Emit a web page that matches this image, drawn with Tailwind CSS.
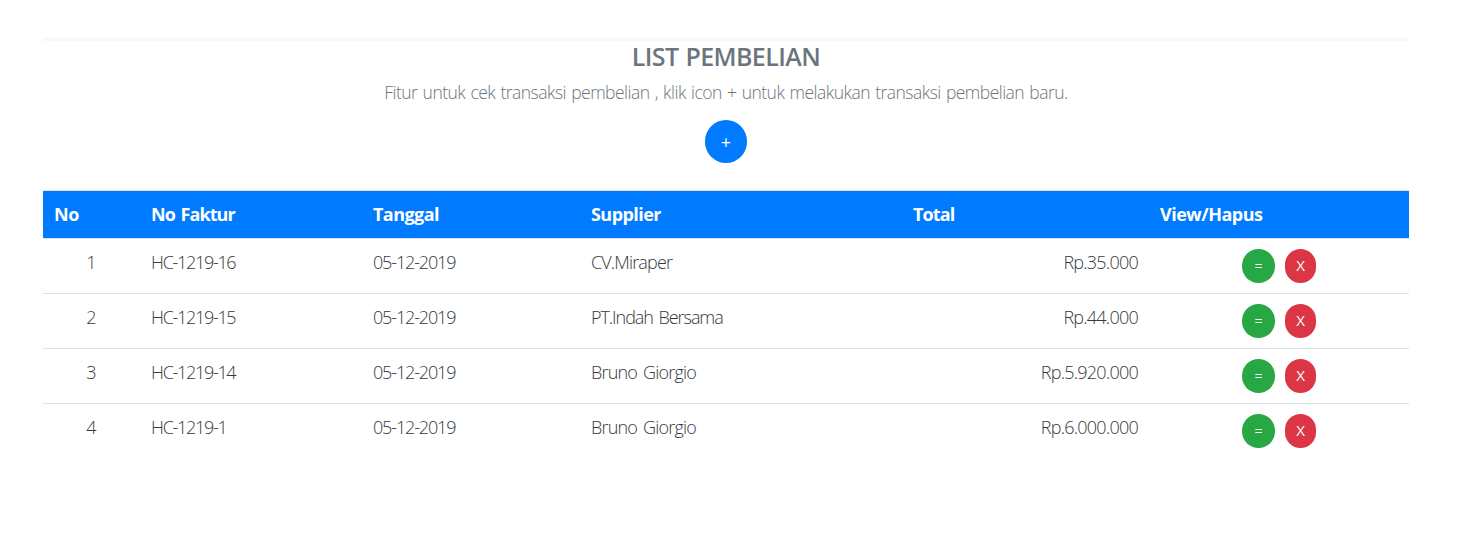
<!DOCTYPE html>
<html lang="id">
<head>
<meta charset="utf-8">
<title>List Pembelian</title>
<script src="https://cdn.jsdelivr.net/npm/@tailwindcss/browser@4"></script>
</head>
<body class="bg-white font-['Segoe_UI','Open_Sans','Noto_Sans',sans-serif] text-[18px] font-light text-[#343a40]">
<main class="ml-[43px] w-[1366px] pt-[38px]">
  <hr class="h-[3px] border-0 bg-[#f8f8f8]">
  <header class="flex flex-col items-center text-[#6c757d]">
    <h1 class="h-[32px] text-[25px] leading-[31px] font-semibold tracking-[-0.6px] [word-spacing:1px] whitespace-nowrap">LIST PEMBELIAN</h1>
    <p class="mt-[6px] text-[17.5px] leading-[26px] tracking-[-0.53px] [word-spacing:1.2px] whitespace-nowrap">Fitur untuk cek transaksi pembelian , klik icon + untuk melakukan transaksi pembelian baru.</p>
    <button class="mt-[15px] h-[43px] w-[42px] rounded-full bg-[#007bff] pt-px text-[18px] font-normal text-white">+</button>
  </header>
  <table class="mt-[27px] w-full table-fixed border-collapse">
    <colgroup><col class="w-[97px]"><col class="w-[222px]"><col class="w-[218px]"><col class="w-[322px]"><col class="w-[247px]"><col class="w-[260px]"></colgroup>
    <thead>
      <tr class="h-[48px] border-y border-[#dee2e6] bg-[#007bff] text-left text-white">
        <th class="px-[11px] font-bold tracking-[-0.3px]">No</th><th class="px-[11px] font-bold tracking-[-0.95px] [word-spacing:2px]">No Faktur</th><th class="px-[11px] font-bold tracking-[-0.55px]">Tanggal</th><th class="px-[11px] font-bold tracking-[-0.55px]">Supplier</th><th class="px-[11px] font-bold tracking-[-0.85px]">Total</th><th class="px-[11px] font-bold tracking-[-0.5px]">View/Hapus</th>
      </tr>
    </thead>
    <tbody id="rows"></tbody>
  </table>
</main>
<script>
const data = [
  ['1','HC-1219-16','05-12-2019','CV.Miraper','Rp.35.000','tracking-[-0.85px]'],
  ['2','HC-1219-15','05-12-2019','PT.Indah Bersama','Rp.44.000','tracking-[-1.05px]'],
  ['3','HC-1219-14','05-12-2019','Bruno Giorgio','Rp.5.920.000','tracking-[-0.8px]'],
  ['4','HC-1219-1','05-12-2019','Bruno Giorgio','Rp.6.000.000','tracking-[-0.8px]']
];
document.getElementById('rows').innerHTML = data.map(r => `
<tr class="h-[55px] border-t border-[#dee2e6] align-top leading-[26px]">
  <td class="pt-[10px] text-center">${r[0]}</td>
  <td class="px-[11px] pt-[10px] tracking-[-1.3px]">${r[1]}</td>
  <td class="px-[11px] pt-[10px] tracking-[-1.15px]">${r[2]}</td>
  <td class="px-[11px] pt-[10px] [word-spacing:2px] ${r[5]}">${r[3]}</td>
  <td class="px-[11px] pt-[10px] text-right tracking-[-0.75px]">${r[4]}</td>
  <td class="pt-[10px]"><div class="flex justify-center gap-[10px] text-[14px] text-white"><button class="h-[34px] w-[33px] rounded-[17px] bg-[#28a745] font-normal">=</button><button class="h-[34px] w-[31px] rounded-[17px] bg-[#dc3545] pb-[2px] text-[15px] font-medium">X</button></div></td>
</tr>`).join('');
</script>
</body>
</html>
